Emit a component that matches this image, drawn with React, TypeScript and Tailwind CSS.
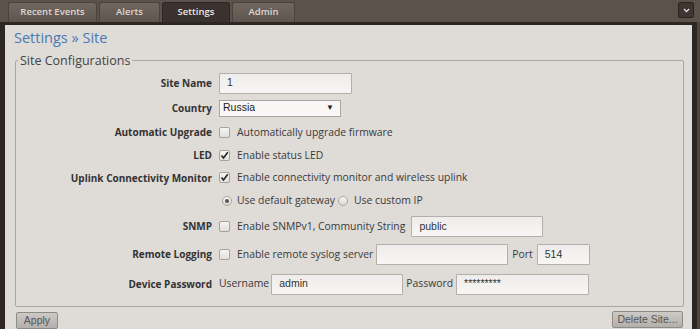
import React from 'react';

const tabs = [
    { label: 'Recent Events', w: 'w-[89px]', active: false },
    { label: 'Alerts', w: 'w-[61px]', active: false },
    { label: 'Settings', w: 'w-[68px]', active: true },
    { label: 'Admin', w: 'w-[63px]', active: false },
];

const Check: React.FC<{ checked?: boolean }> = ({ checked }) => (
    <span className="w-[11px] h-[11px] shrink-0 rounded-[2px] border border-[#a7a29d] bg-gradient-to-b from-[#f7f5f3] to-[#e2dfdb] flex items-center justify-center">
        {checked && (
            <svg width="9" height="9" viewBox="0 0 9 9">
                <path d="M1.5 4.5 L3.5 7 L7.8 1.2" fill="none" stroke="#222" strokeWidth="1.6" />
            </svg>
        )}
    </span>
);

const Radio: React.FC<{ checked?: boolean }> = ({ checked }) => (
    <span className="w-[10px] h-[10px] shrink-0 rounded-full border border-[#aaa5a0] bg-gradient-to-b from-[#f8f6f4] to-[#dcd8d4] flex items-center justify-center">
        {checked && <span className="w-[4px] h-[4px] rounded-full bg-[#555]" />}
    </span>
);

const Input: React.FC<{ value: string; w: string; h?: string }> = ({ value, w, h = 'h-[21px]' }) => (
    <div className={`${w} ${h} shrink-0 border border-[#b3afab] bg-gradient-to-b from-[#efedeb] to-[#f7f6f5] rounded-[1px] pl-[7px] flex items-center text-[10.5px] text-[#333] font-['Liberation_Sans',sans-serif]`}>
        {value}
    </div>
);

const Row: React.FC<{ label?: string; h: string; children: React.ReactNode }> = ({ label, h, children }) => (
    <div className={`flex items-center ${h}`}>
        <div className="w-[196px] text-right text-[10px] font-bold text-[#333]">{label}</div>
        <div className="ml-[7px] flex items-center text-[10.4px] text-[#3a3a3a]">{children}</div>
    </div>
);

export default function App() {
    return (
        <div className="w-[700px] h-[329px] overflow-hidden bg-[#2d2623] flex flex-col font-['Open_Sans',sans-serif]">
            {/* top bar */}
            <div className="h-[22px] shrink-0 bg-[#5b524b] flex items-end justify-between pl-[8px] pr-[6px]">
                <div className="flex gap-[2px]">
                    {tabs.map((t) => (
                        <div
                            key={t.label}
                            className={`${t.w} h-[20px] rounded-t-[3px] flex items-center justify-center text-[9.5px] font-semibold ${
                                t.active
                                    ? 'bg-[#3a322e] text-[#ece8e4] border border-b-0 border-[#2d2623]'
                                    : 'bg-gradient-to-b from-[#716760] to-[#5e554f] text-[#ddd7d1] border border-b-0 border-[#4a423d]'
                            }`}
                        >
                            {t.label}
                        </div>
                    ))}
                </div>
                <div className="self-start mt-[2px] w-[16px] h-[16px] rounded-[2px] bg-[#3e3632] border border-[#2a2320] flex items-center justify-center">
                    <svg width="7" height="5" viewBox="0 0 7 5">
                        <path d="M1 1 L3.5 3.6 L6 1" fill="none" stroke="#e8e4e0" strokeWidth="1.3" />
                    </svg>
                </div>
            </div>

            {/* panel */}
            <div className="flex-1 flex pt-[3px] pl-[5px] pr-[5px] border-r-[3px] border-[#4d443e]">
                <div className="flex-1 bg-[#dfdbd7] pl-[10px] pr-[8px] flex flex-col">
                    <div className="pt-[4px] -ml-[1px] text-[14.5px] leading-[18px] text-[#4a7ab3]">Settings » Site</div>

                    <fieldset className="mt-[6px] border border-[#aca7a2] rounded-[2px] pb-[7px]">
                        <legend className="ml-[2px] px-[2px] text-[12.5px] leading-[15px] text-[#444]">Site Configurations</legend>
                        <div className="mt-[3px] flex flex-col">
                            <Row label="Site Name" h="h-[24px]">
                                <Input value="1" w="w-[133px]" />
                            </Row>
                            <Row label="Country" h="h-[26px]">
                                <div className="w-[122px] h-[17px] border border-[#a9a5a1] bg-[#f8f7f6] flex items-center justify-between pl-[3px] pr-[6px] text-[10.5px] text-[#222] font-['Liberation_Sans',sans-serif]">
                                    <span>Russia</span>
                                    <span className="text-[8px]">▼</span>
                                </div>
                            </Row>
                            <Row label="Automatic Upgrade" h="h-[23px]">
                                <Check />
                                <span className="ml-[7px]">Automatically upgrade firmware</span>
                            </Row>
                            <Row label="LED" h="h-[23px]">
                                <Check checked />
                                <span className="ml-[7px]">Enable status LED</span>
                            </Row>
                            <Row label="Uplink Connectivity Monitor" h="h-[22px]">
                                <Check checked />
                                <span className="ml-[7px]">Enable connectivity monitor and wireless uplink</span>
                            </Row>
                            <Row h="h-[24px]">
                                <span className="ml-[3px]"><Radio checked /></span>
                                <span className="ml-[5px]">Use default gateway</span>
                                <span className="ml-[3px]"><Radio /></span>
                                <span className="ml-[6px]">Use custom IP</span>
                            </Row>
                            <Row label="SNMP" h="h-[27px]">
                                <Check />
                                <span className="ml-[7px]">Enable SNMPv1, Community String</span>
                                <span className="ml-[6px]"><Input value="public" w="w-[132px]" /></span>
                            </Row>
                            <Row label="Remote Logging" h="h-[29px]">
                                <Check />
                                <span className="ml-[7px]">Enable remote syslog server</span>
                                <span className="ml-[3px]"><Input value="" w="w-[132px]" /></span>
                                <span className="ml-[4px]">Port</span>
                                <span className="ml-[4px]"><Input value="514" w="w-[53px]" /></span>
                            </Row>
                            <Row label="Device Password" h="h-[30px]">
                                <span>Username</span>
                                <span className="ml-[2px]"><Input value="admin" w="w-[132px]" /></span>
                                <span className="ml-[3px]">Password</span>
                                <span className="ml-[3px]"><Input value="*********" w="w-[133px]" /></span>
                            </Row>
                        </div>
                    </fieldset>

                    <div className="mt-[4px] flex justify-between">
                        <button className="ml-[1px] mt-[1px] w-[42px] h-[17px] border border-[#8e8a86] rounded-[2px] bg-gradient-to-b from-[#cdc9c5] to-[#b3afab] text-[10.5px] text-[#555] font-['Liberation_Sans',sans-serif]">
                            Apply
                        </button>
                        <button className="mr-[1px] w-[71px] h-[17px] border border-[#8e8a86] rounded-[2px] bg-gradient-to-b from-[#cdc9c5] to-[#b3afab] text-[10.5px] text-[#555] font-['Liberation_Sans',sans-serif]">
                            Delete Site...
                        </button>
                    </div>
                </div>
            </div>
        </div>
    );
}
